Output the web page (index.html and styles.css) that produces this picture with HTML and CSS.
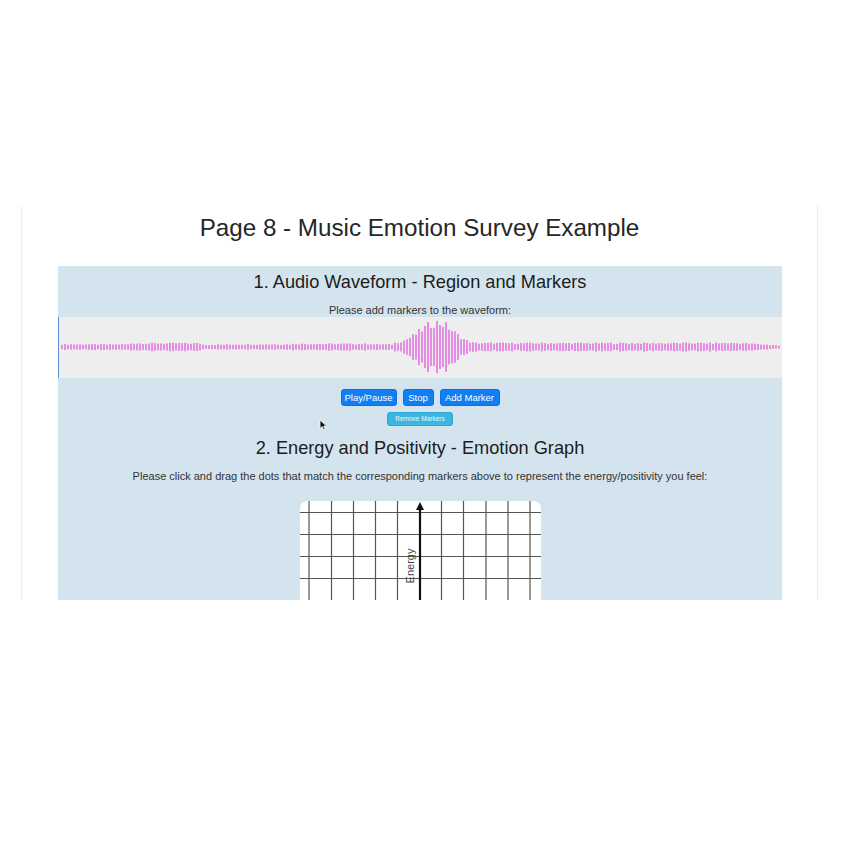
FILE: index.html
```html
<!DOCTYPE html>
<html>
<head>
<meta charset="utf-8">
<title>Music Emotion Survey Example</title>
<link rel="stylesheet" href="styles.css">
</head>
<body>
<div class="frame">
  <h1 class="page-title">Page 8 - Music Emotion Survey Example</h1>
  <div class="panel">
    <h2 class="section-title first">1. Audio Waveform - Region and Markers</h2>
    <p class="hint">Please add markers to the waveform:</p>
    <div class="wave">
      <svg id="wave-svg" class="wave-svg" width="723" height="61" viewBox="0 0 723 61"></svg>
    </div>
    <div class="btn-row">
      <button class="btn btn-play">Play/Pause</button>
      <button class="btn btn-stop">Stop</button>
      <button class="btn btn-add">Add Marker</button>
    </div>
    <div class="btn-row second">
      <button class="btn-remove">Remove Markers</button>
    </div>
    <h2 class="section-title">2. Energy and Positivity - Emotion Graph</h2>
    <p class="hint wide">Please click and drag the dots that match the corresponding markers above to represent the energy/positivity you feel:</p>
    <div class="graph">
      <svg width="241" height="120" viewBox="0 0 241 120">
        <g stroke="#555" stroke-width="1.2">
          <line x1="9" y1="0" x2="9" y2="120"/>
          <line x1="31.5" y1="0" x2="31.5" y2="120"/>
          <line x1="53.5" y1="0" x2="53.5" y2="120"/>
          <line x1="75.5" y1="0" x2="75.5" y2="120"/>
          <line x1="97.5" y1="0" x2="97.5" y2="120"/>
          <line x1="141.5" y1="0" x2="141.5" y2="120"/>
          <line x1="163.5" y1="0" x2="163.5" y2="120"/>
          <line x1="186" y1="0" x2="186" y2="120"/>
          <line x1="208" y1="0" x2="208" y2="120"/>
          <line x1="230" y1="0" x2="230" y2="120"/>
          <line x1="0" y1="11.5" x2="241" y2="11.5"/>
          <line x1="0" y1="33.5" x2="241" y2="33.5"/>
          <line x1="0" y1="55.5" x2="241" y2="55.5"/>
          <line x1="0" y1="77.5" x2="241" y2="77.5"/>
          <line x1="0" y1="99.5" x2="241" y2="99.5"/>
        </g>
        <line x1="120" y1="6" x2="120" y2="120" stroke="#111" stroke-width="2.2"/>
        <polygon points="120,1 116,9 124,9" fill="#111"/>
        <text class="axis-label" x="0" y="0" transform="translate(114 65) rotate(-90)" text-anchor="middle">Energy</text>
      </svg>
    </div>
    <svg class="mouse" width="9" height="12" viewBox="0 0 9 12">
      <path d="M1 1 L1 9.5 L3.2 7.6 L4.8 11 L6.2 10.4 L4.7 7.1 L7.6 7.1 Z" fill="#111" stroke="#fff" stroke-width="0.8"/>
    </svg>
  </div>
</div>
<script src="script.js"></script>
</body>
</html>
```

FILE: styles.css
```css
html, body {
  margin: 0;
  padding: 0;
  background: #ffffff;
}
body {
  font-family: "Liberation Sans", Arial, Helvetica, sans-serif;
  color: #222;
}
.frame {
  margin: 206px 0 0 21px;
  width: 795px;
  height: 394px;
  border-left: 1px solid #ececec;
  border-right: 1px solid #ececec;
  overflow: hidden;
}
.page-title {
  margin: 7px 0 0 0;
  font-size: 24.2px;
  line-height: 30px;
  font-weight: normal;
  text-align: center;
  color: #262626;
}
.panel {
  position: relative;
  margin: 23px 35px 0 36px;
  height: 400px;
  background: #d3e4ee;
  padding-top: 6px;
  text-align: center;
}
.section-title {
  margin: 0;
  font-size: 18.2px;
  line-height: 20px;
  font-weight: normal;
  color: #1c1c1c;
}
.hint {
  margin: 12px 0 0 0;
  font-size: 11px;
  line-height: 13px;
  color: #333;
}
.wave {
  height: 61px;
  background: #eeeeee;
  border-left: 1px solid #5b8fd8;
  box-sizing: border-box;
  text-align: left;
}
.wave-svg {
  display: block;
}
.btn-row {
  display: flex;
  justify-content: center;
  gap: 6px;
  margin-top: 11px;
}
.btn-row.second {
  margin-top: 6px;
}
.btn {
  height: 17px;
  padding: 0;
  border: 1px solid #0b70e0;
  border-radius: 3px;
  background: #127ef4;
  color: #fff;
  font-family: "Liberation Sans", Arial, sans-serif;
  font-size: 9.5px;
  line-height: 15px;
}
.btn-play { width: 56px; }
.btn-stop { width: 31px; }
.btn-add { width: 60px; }
.btn-remove {
  width: 66px;
  height: 14px;
  padding: 0;
  border: 1px solid #2aa6d2;
  border-radius: 3px;
  background: #3bb6e0;
  color: #eafaff;
  font-family: "Liberation Sans", Arial, sans-serif;
  font-size: 6.5px;
  line-height: 12px;
}
.btn-row.second + .section-title {
  margin-top: 12px;
}
.graph {
  width: 241px;
  height: 120px;
  margin: 18px auto 0 auto;
  background: #ffffff;
  border-radius: 7px 7px 0 0;
  overflow: hidden;
}
.graph svg {
  display: block;
}
.axis-label {
  font-family: "Liberation Sans", Arial, sans-serif;
  font-size: 11px;
  fill: #444;
}
.mouse {
  position: absolute;
  left: 261px;
  top: 153px;
}
```

FILE: script.js
```js
(function () {
  var svg = document.getElementById('wave-svg');
  function noise(i) {
    var v = Math.sin(i * 12.9898) * 43758.5453;
    return v - Math.floor(v);
  }
  function env(x) {
    var a = 2.6;
    if (x > 128 && x < 200) a = 3.6;
    if (x > 200 && x < 230) a = 2.3;
    if (x > 290 && x < 370) a = 3.1;
    if (x > 470 && x < 740) a = 3.8;
    if (x >= 740) a = 3.8 - (x - 740) / 40 * 2.5;
    var c = 436;
    var d = x - c;
    var w = d < 0 ? 18 : 15;
    var burst = 21 * Math.exp(-(d * d) / (2 * w * w));
    if (x > 392 && x < 485) a = Math.max(a, burst + 3);
    return a;
  }
  var out = '';
  var i = 0;
  for (var x = 60; x < 780; x += 3) {
    var a = env(x) * (0.8 + 0.4 * noise(i));
    if (a < 1) a = 1;
    var lx = x - 58;
    out += '<rect x="' + lx + '" y="' + (30 - a).toFixed(1) + '" width="2" height="' + (2 * a).toFixed(1) + '" fill="#e48de2"/>';
    i++;
  }
  svg.innerHTML = out;
})();
```
